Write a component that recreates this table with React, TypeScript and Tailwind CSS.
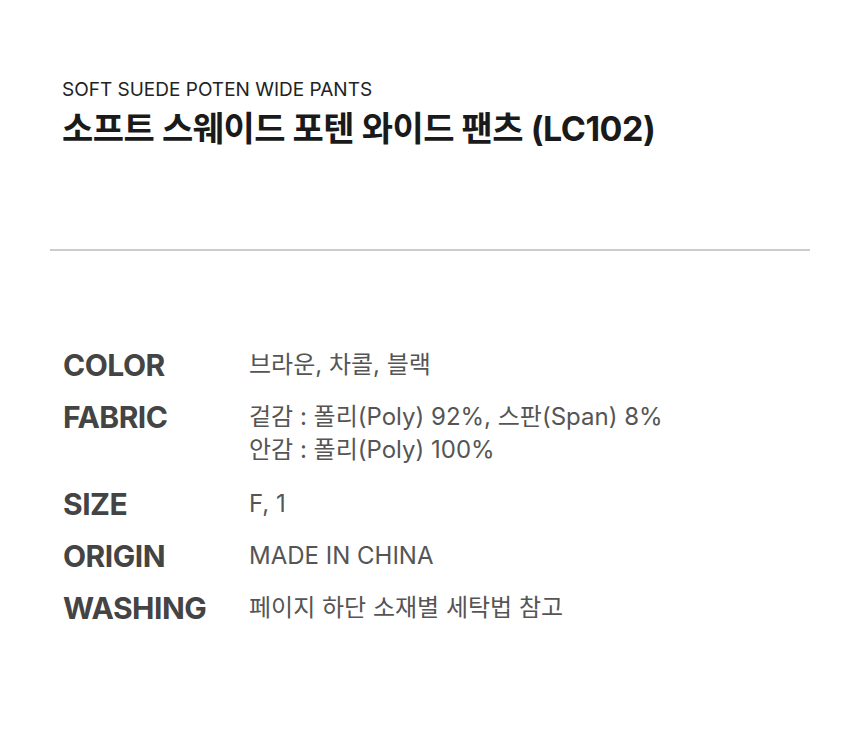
const specs: { label: string; lines: string[] }[] = [
  { label: "COLOR", lines: ["브라운, 차콜, 블랙"] },
  { label: "FABRIC", lines: ["겉감 : 폴리(Poly) 92%, 스판(Span) 8%", "안감 : 폴리(Poly) 100%"] },
  { label: "SIZE", lines: ["F, 1"] },
  { label: "ORIGIN", lines: ["MADE IN CHINA"] },
  { label: "WASHING", lines: ["페이지 하단 소재별 세탁법 참고"] },
];

const font = { fontFamily: 'Inter, "Noto Sans CJK KR", sans-serif' };

const App = () => {
  return (
    <div className="h-[752px] w-[860px] bg-white" style={font}>
      <div className="px-[62px] pt-[77px]">
        <p className="text-[19px] leading-[26px] tracking-[0px] text-[#222]">
          SOFT SUEDE POTEN WIDE PANTS
        </p>
        <h1 className="mt-[4px] text-[34px] font-bold leading-[44px] tracking-[-0.5px] text-[#1a1a1a]">
          소프트 스웨이드 포텐 와이드 팬츠 (LC102)
        </h1>
      </div>

      <div className="mx-[50px] mt-[98px] h-[2px] bg-[#cccccc]" />

      <div className="flex flex-col gap-[16px] px-[63px] pt-[96px]">
        {specs.map((row) => (
          <div key={row.label} className="flex items-start">
            <div className="w-[186px] shrink-0 text-[30px] font-bold leading-[36px] tracking-[-0.5px] text-[#444]">
              {row.label}
            </div>
            <div className={row.lines.length > 1 ? "flex flex-col pt-[1px] pb-[4px]" : "flex flex-col pt-[1px]"}>
              {row.lines.map((line) => (
                <span
                  key={line}
                  className="text-[24px] leading-[33px] tracking-[0px] text-[#555]"
                >
                  {line}
                </span>
              ))}
            </div>
          </div>
        ))}
      </div>
    </div>
  );
};

export default App;
